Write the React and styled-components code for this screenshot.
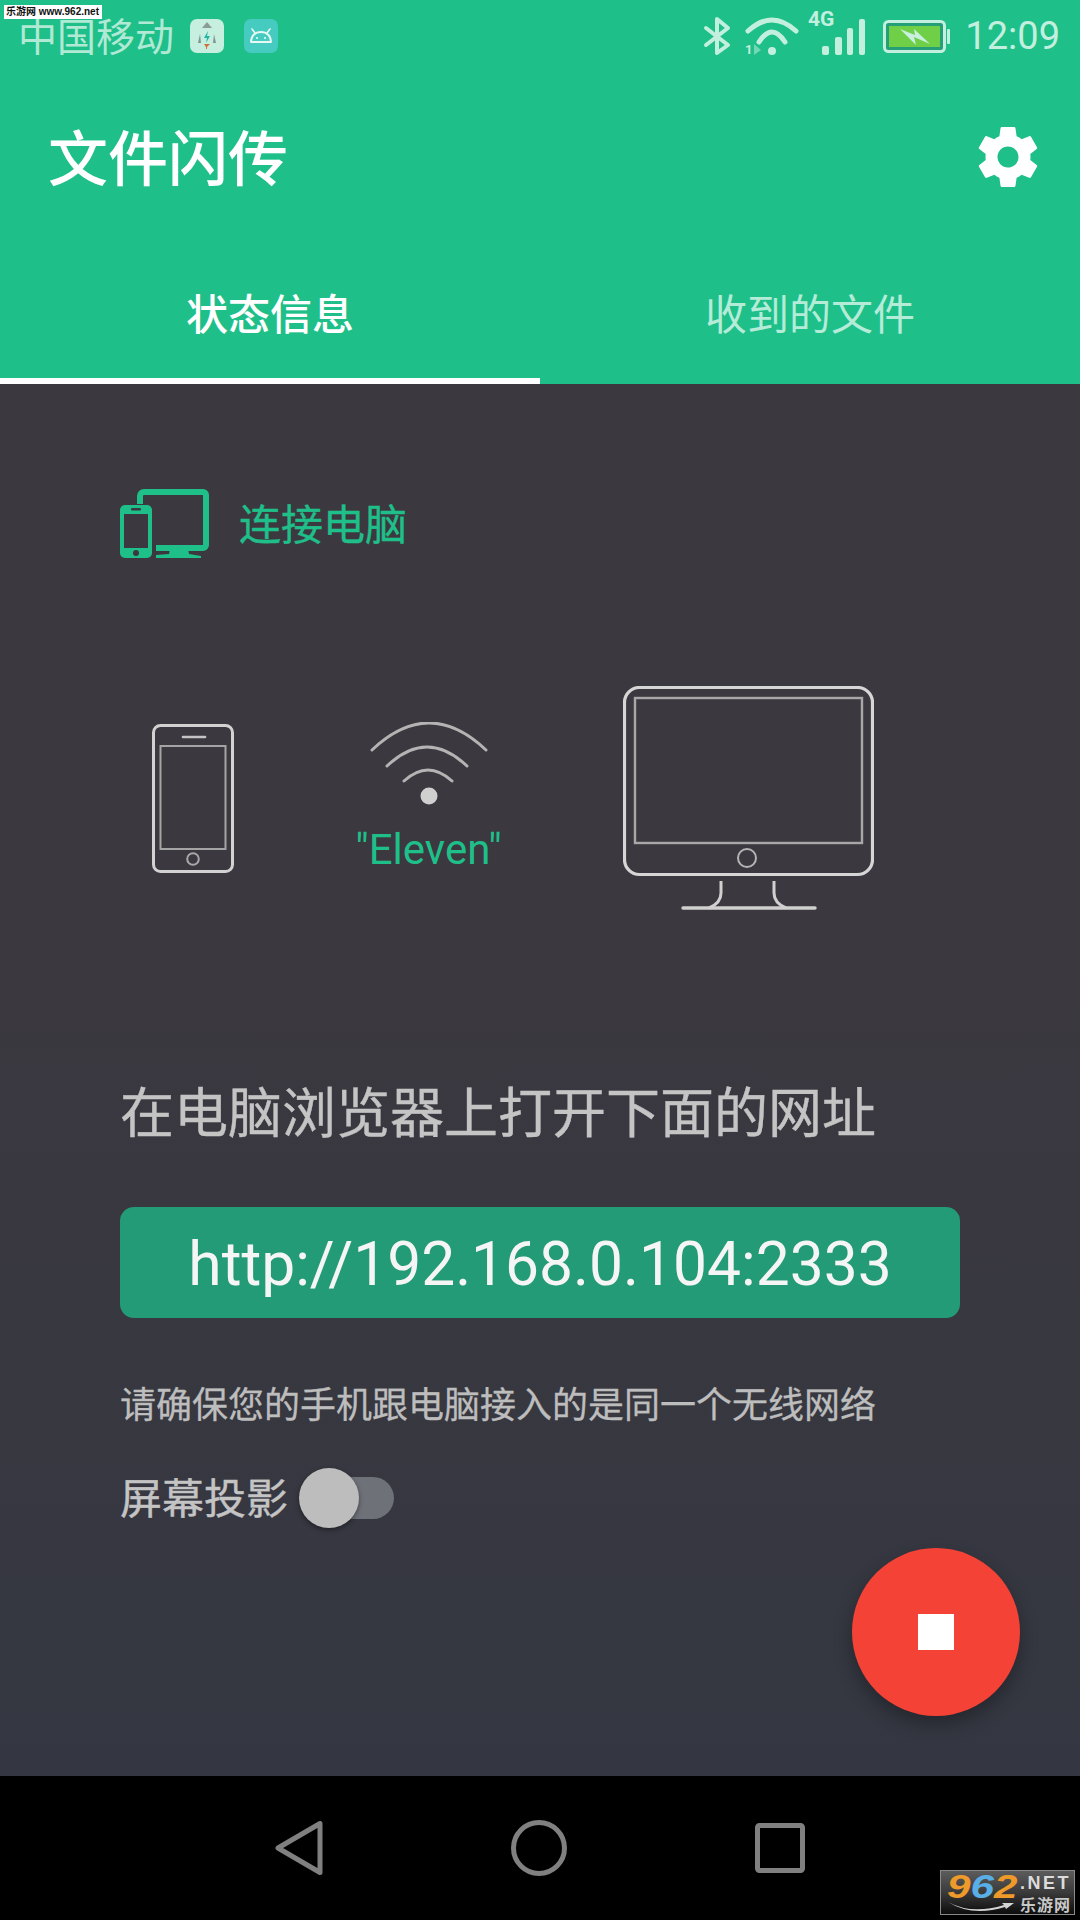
import React from "react";
import styled, { createGlobalStyle } from "styled-components";

const GREEN = "#1fbf8a";
const STATUS = "#c3efdf";

const Global = createGlobalStyle`
  html, body { margin: 0; padding: 0; background: #000; }
  * { box-sizing: border-box; }
  body { font-family: Roboto, "Noto Sans CJK SC", sans-serif; }
`;

const Page = styled.div`
  position: relative;
  width: 1080px;
  height: 1920px;
  display: flex;
  flex-direction: column;
  overflow: hidden;
`;

const Header = styled.header`
  background: ${GREEN};
  display: flex;
  flex-direction: column;
  height: 384px;
`;

// 状态栏
const StatusBar = styled.div`
  height: 72px;
  display: flex;
  align-items: center;
  justify-content: space-between;
  padding: 0 20px 0 18px;
  color: ${STATUS};
`;
const StatusGroup = styled.div`
  display: flex;
  align-items: center;
`;
const Carrier = styled.span`
  font-size: 39px;
  line-height: 44px;
  color: #b0e9d4;
  margin-top: 4px;
`;
const StatusIcon = styled.svg`
  display: block;
  flex: none;
  overflow: visible;
  margin-left: ${(p) => p.$gap || 0}px;
  margin-top: ${(p) => p.$top || 0}px;
`;
const Clock = styled.span`
  font-size: 38px;
  line-height: 44px;
  margin-left: 15px;
`;
const Watermark = styled.div`
  position: absolute;
  left: 4px;
  top: 5px;
  width: 98px;
  height: 14px;
  background: #fff;
  color: #111;
  font: bold 10px/14px "Liberation Sans", "Noto Sans CJK SC", sans-serif;
  white-space: nowrap;
  padding-left: 2px;
`;

// 标题栏
const Toolbar = styled.div`
  height: 170px;
  display: flex;
  align-items: center;
  justify-content: space-between;
  padding: 0 36px 0 48px;
`;
const Title = styled.h1`
  margin: 8px 0 0;
  font-size: 60px;
  font-weight: 500;
  line-height: 80px;
  color: #fff;
`;

const Tabs = styled.div`
  flex: 1;
  display: flex;
`;
const Tab = styled.div`
  flex: 1;
  display: flex;
  align-items: center;
  justify-content: center;
  padding-top: 2px;
  font-size: 42px;
  font-weight: ${(p) => (p.$active ? 500 : 400)};
  color: ${(p) => (p.$active ? "#fff" : "#b4ecd8")};
  border-bottom: 6px solid ${(p) => (p.$active ? "#fff" : "transparent")};
`;

// 内容
const Body = styled.main`
  position: relative;
  height: 1392px;
  padding: 105px 120px 0;
  background: linear-gradient(180deg, #3c383f 0%, #3b383f 40%, #343741 100%);
`;
const ConnectRow = styled.div`
  display: flex;
  align-items: center;
  gap: 30px;
  height: 69px;
`;
const ConnectLabel = styled.span`
  font-size: 42px;
  line-height: 60px;
  color: ${GREEN};
  margin-top: 5px;
  -webkit-text-stroke: 0.4px ${GREEN};
`;
const Illustration = styled.div`
  margin-top: 128px;
  padding-left: 32px;
  display: flex;
  align-items: center;
  gap: 122px;
`;
const Hotspot = styled.div`
  width: 145px;
  display: flex;
  flex-direction: column;
  align-items: center;
`;
const Ssid = styled.div`
  margin-top: 18px;
  font-size: 42px;
  line-height: 50px;
  color: ${GREEN};
  white-space: nowrap;
`;
const Heading = styled.div`
  margin-top: 170px;
  font-size: 54px;
  line-height: 70px;
  color: #c4c4c4;
  white-space: nowrap;
  -webkit-text-stroke: 0.4px #c4c4c4;
`;
const UrlBox = styled.div`
  margin-top: 57px;
  height: 111px;
  padding-top: 3px;
  border-radius: 14px;
  background: #239b76;
  color: #f5f5f5;
  font-size: 60.5px;
  display: flex;
  align-items: center;
  justify-content: center;
`;
const Note = styled.div`
  margin-top: 63px;
  font-size: 36px;
  line-height: 50px;
  color: #bdbdbd;
  white-space: nowrap;
  -webkit-text-stroke: 0.3px #bdbdbd;
`;
const ToggleRow = styled.div`
  margin-top: 37px;
  height: 60px;
  display: flex;
  align-items: center;
  gap: 11px;
`;
const ToggleLabel = styled.span`
  font-size: 42px;
  line-height: 60px;
  margin-top: 3px;
  color: #c4c4c4;
  -webkit-text-stroke: 0.4px #c4c4c4;
`;
const Switch = styled.div`
  position: relative;
  width: 95px;
  height: 60px;
  display: flex;
  align-items: center;
  justify-content: flex-end;
`;
const Track = styled.div`
  width: 83px;
  height: 42px;
  border-radius: 21px;
  background: #6e7178;
`;
const Thumb = styled.div`
  position: absolute;
  left: 0;
  top: 0;
  width: 60px;
  height: 60px;
  border-radius: 50%;
  background: #bdbdbd;
  box-shadow: 0 2px 5px rgba(0, 0, 0, 0.4);
`;
const Fab = styled.div`
  position: absolute;
  right: 60px;
  bottom: 60px;
  width: 168px;
  height: 168px;
  border-radius: 50%;
  background: #f44336;
  box-shadow: 0 8px 18px rgba(0, 0, 0, 0.3);
  display: flex;
  align-items: center;
  justify-content: center;
`;
const StopMark = styled.div`
  width: 36px;
  height: 36px;
  background: #fff;
`;

// 底部导航
const NavBar = styled.nav`
  flex: 1;
  background: #000;
  display: flex;
  align-items: center;
  justify-content: center;
  gap: 188px;
`;

// 水印 logo
const Logo = styled.div`
  position: absolute;
  left: 940px;
  top: 1870px;
  width: 135px;
  height: 45px;
  border: 1px solid #8a8a8a;
  background: linear-gradient(180deg, #5c5c5c 0%, #3a3a3a 50%, #0c0c0c 100%);
  display: flex;
  padding: 0 3px 0 6px;
`;
const LogoLeft = styled.div`
  position: relative;
  width: 72px;
  flex: none;
`;
const LogoDigits = styled.div`
  font: italic bold 33px/32px "Liberation Sans", sans-serif;
  white-space: nowrap;
  transform: scaleX(1.28);
  transform-origin: left center;
`;
const Digit = styled.span`
  color: ${(p) => p.$color};
`;
const Swoosh = styled.svg`
  position: absolute;
  left: 1px;
  bottom: 1px;
`;
const LogoRight = styled.div`
  flex: 1;
  display: flex;
  flex-direction: column;
  align-items: flex-end;
`;
const LogoNet = styled.div`
  font: bold 18px/24px "Liberation Sans", sans-serif;
  letter-spacing: 2.5px;
  color: #dcdcdc;
  white-space: nowrap;
`;
const LogoCn = styled.div`
  font: bold 16px/18px "Noto Sans CJK SC", sans-serif;
  letter-spacing: 1px;
  color: #c8c8c8;
  white-space: nowrap;
`;

const RocketIcon = () => (
  <StatusIcon width="34" height="34" viewBox="0 0 34 34" $gap={16}>
    <rect width="34" height="34" rx="7" fill="#c6efe0" />
    <path d="M17 3l5 6H12z" fill="#8c9c98" />
    <path d="M10 15l-2 9h3zM24 15l2 9h-3z" fill="#84958f" />
    <path d="M18 12l-4 7h3l-1 5 4-7h-3z" fill="#22b5a5" />
    <path d="M14 25h6l-3 3v2h-1v-2z" fill="#d2723a" />
  </StatusIcon>
);

const AndroidIcon = () => (
  <StatusIcon width="34" height="34" viewBox="0 0 34 34" $gap={20}>
    <rect width="34" height="34" rx="7" fill="#45cbc0" />
    <path
      d="M7 23c0-6 4-10 10-10s10 4 10 10z"
      fill="none"
      stroke="#e8f8f5"
      strokeWidth="1.8"
      strokeLinejoin="round"
    />
    <path d="M11 14l-3-4M23 14l3-4" stroke="#e8f8f5" strokeWidth="1.6" strokeLinecap="round" />
    <circle cx="13" cy="19" r="1.1" fill="#e8f8f5" />
    <circle cx="21" cy="19" r="1.1" fill="#e8f8f5" />
  </StatusIcon>
);

const BluetoothIcon = () => (
  <StatusIcon width="28" height="38" viewBox="0 0 28 38">
    <path
      d="M3 11l22 17-11 8V2l11 9L3 28"
      fill="none"
      stroke={STATUS}
      strokeWidth="4"
      strokeLinejoin="round"
      strokeLinecap="round"
    />
  </StatusIcon>
);

const WifiStatusIcon = () => (
  <StatusIcon width="53" height="38" viewBox="0 0 53 38" $gap={13}>
    <path d="M4 14Q28 -8 52 14" fill="none" stroke={STATUS} strokeWidth="5" strokeLinecap="round" />
    <path d="M15 25Q28 5 41 25" fill="none" stroke={STATUS} strokeWidth="5" strokeLinecap="round" />
    <circle cx="28" cy="34" r="4" fill={STATUS} />
    <text x="1" y="37" fontSize="13" fontWeight="700" fontFamily="Roboto" fill={STATUS}>
      1
    </text>
    <path d="M10 27l7 6-7 5z" fill={STATUS} opacity="0.5" />
  </StatusIcon>
);

const SignalIcon = () => (
  <StatusIcon width="58" height="44" viewBox="0 0 58 44" $gap={10} $top={-6}>
    <text x="1" y="15" fontSize="21" fontWeight="700" fontFamily="Roboto" fill={STATUS}>
      4G
    </text>
    <rect x="15" y="35" width="7" height="9" rx="2" fill={STATUS} />
    <rect x="28" y="26" width="7" height="18" rx="2" fill={STATUS} />
    <rect x="40" y="17" width="6" height="27" rx="2" fill={STATUS} />
    <rect x="52" y="8" width="6" height="36" rx="2" fill={STATUS} />
  </StatusIcon>
);

const BatteryIcon = () => (
  <StatusIcon width="67" height="33" viewBox="0 0 67 33" $gap={18}>
    <rect x="1.5" y="1.5" width="60" height="30" rx="4" fill="#249f78" stroke={STATUS} strokeWidth="3" />
    <rect x="6" y="6" width="51" height="21" fill="#6fd047" />
    <rect x="64" y="9" width="3" height="15" rx="1" fill={STATUS} />
    <path d="M17 9l15 6-1-6 16 15-16-7 2 8z" fill="#c9efe0" />
  </StatusIcon>
);

const GearIcon = () => (
  <svg width="72" height="72" viewBox="0 0 24 24" fill="#fff">
    <path d="M19.43 12.98c.04-.32.07-.64.07-.98s-.03-.66-.07-.98l2.11-1.65c.19-.15.24-.42.12-.64l-2-3.46c-.12-.22-.39-.3-.61-.22l-2.49 1c-.52-.4-1.08-.73-1.69-.98l-.38-2.65C14.46 2.18 14.25 2 14 2h-4c-.25 0-.46.18-.49.42l-.38 2.65c-.61.25-1.17.59-1.69.98l-2.49-1c-.23-.09-.49 0-.61.22l-2 3.46c-.13.22-.07.49.12.64l2.11 1.65c-.04.32-.07.65-.07.98s.03.66.07.98l-2.11 1.65c-.19.15-.24.42-.12.64l2 3.46c.12.22.39.3.61.22l2.49-1c.52.4 1.08.73 1.69.98l.38 2.65c.03.24.24.42.49.42h4c.25 0 .46-.18.49-.42l.38-2.65c.61-.25 1.17-.59 1.69-.98l2.49 1c.23.09.49 0 .61-.22l2-3.46c.12-.22.07-.49-.12-.64l-2.11-1.65zM12 15.5c-1.93 0-3.5-1.57-3.5-3.5s1.57-3.5 3.5-3.5 3.5 1.57 3.5 3.5-1.57 3.5-3.5 3.5z" />
  </svg>
);

const DevicesIcon = () => (
  <svg width="89" height="69" viewBox="0 0 89 69">
    <path
      d="M20 15V7a4 4 0 0 1 4-4H83a3 3 0 0 1 3 3v50a3 3 0 0 1-3 3H36"
      fill="none"
      stroke={GREEN}
      strokeWidth="6"
    />
    <path d="M50 60h18l1 5 12 2v2H36v-3l13-1z" fill={GREEN} />
    <rect x="0" y="16" width="32" height="53" rx="5" fill={GREEN} />
    <rect x="4" y="25" width="24" height="34" fill="#3b383f" />
    <rect x="11" y="19" width="10" height="2.5" rx="1" fill="#3b383f" />
    <circle cx="16" cy="64" r="3" fill="#3b383f" />
  </svg>
);

const PhoneArt = () => (
  <svg width="82" height="149" viewBox="0 0 82 149" fill="none">
    <rect x="1.5" y="1.5" width="79" height="146" rx="7" stroke="#d2d2d2" strokeWidth="3" />
    <rect x="8.5" y="22" width="65" height="103" stroke="#a4a4a4" strokeWidth="2" />
    <path d="M31 13h22" stroke="#c4c4c4" strokeWidth="2.6" strokeLinecap="round" />
    <circle cx="41" cy="135" r="5.8" stroke="#a8a8a8" strokeWidth="2" />
  </svg>
);

const WifiArt = () => (
  <svg width="145" height="85" viewBox="0 0 145 85" fill="none">
    <path d="M16 28Q73 -26 130 28" stroke="#b4b4b4" strokeWidth="3" strokeLinecap="round" />
    <path d="M31 44Q71 6 111 44" stroke="#b4b4b4" strokeWidth="3" strokeLinecap="round" />
    <path d="M48 59Q72 37 96 59" stroke="#b4b4b4" strokeWidth="3" strokeLinecap="round" />
    <circle cx="73" cy="74" r="8.5" fill="#d0d0d0" />
  </svg>
);

const MonitorArt = () => (
  <svg width="251" height="224" viewBox="0 0 251 224" fill="none">
    <rect x="1.5" y="1.5" width="248" height="187" rx="15" stroke="#d6d6d6" strokeWidth="3.2" />
    <rect x="12" y="12" width="227" height="145" stroke="#a8a8a8" strokeWidth="2.4" />
    <circle cx="124" cy="172" r="9" stroke="#b4b4b4" strokeWidth="2" />
    <path d="M98 195v12q0 10-12 15M151 195v12q0 10 12 15" stroke="#d0d0d0" strokeWidth="3" />
    <path d="M60 222H192" stroke="#d0d0d0" strokeWidth="3.4" strokeLinecap="round" />
  </svg>
);

const BackIcon = () => (
  <svg width="48" height="54" viewBox="0 0 48 54" fill="none">
    <path d="M3 27L45 2.5V51.5z" stroke="#808080" strokeWidth="5" strokeLinejoin="round" />
  </svg>
);
const HomeIcon = () => (
  <svg width="56" height="56" viewBox="0 0 56 56" fill="none">
    <circle cx="28" cy="28" r="25.5" stroke="#808080" strokeWidth="5" />
  </svg>
);
const RecentIcon = () => (
  <svg width="50" height="50" viewBox="0 0 50 50" fill="none">
    <rect x="2.5" y="2.5" width="45" height="45" rx="2" stroke="#808080" strokeWidth="5" />
  </svg>
);

const App = () => {
  return (
    <Page>
      <Global />
      <Header>
        <StatusBar>
          <StatusGroup>
            <Carrier>中国移动</Carrier>
            <RocketIcon />
            <AndroidIcon />
          </StatusGroup>
          <StatusGroup>
            <BluetoothIcon />
            <WifiStatusIcon />
            <SignalIcon />
            <BatteryIcon />
            <Clock>12:09</Clock>
          </StatusGroup>
        </StatusBar>
        <Toolbar>
          <Title>文件闪传</Title>
          <GearIcon />
        </Toolbar>
        <Tabs>
          <Tab $active>状态信息</Tab>
          <Tab>收到的文件</Tab>
        </Tabs>
      </Header>

      <Body>
        <ConnectRow>
          <DevicesIcon />
          <ConnectLabel>连接电脑</ConnectLabel>
        </ConnectRow>

        <Illustration>
          <PhoneArt />
          <Hotspot>
            <WifiArt />
            <Ssid>"Eleven"</Ssid>
          </Hotspot>
          <MonitorArt />
        </Illustration>

        <Heading>在电脑浏览器上打开下面的网址</Heading>
        <UrlBox>http://192.168.0.104:2333</UrlBox>
        <Note>请确保您的手机跟电脑接入的是同一个无线网络</Note>

        <ToggleRow>
          <ToggleLabel>屏幕投影</ToggleLabel>
          <Switch>
            <Track />
            <Thumb />
          </Switch>
        </ToggleRow>

        <Fab>
          <StopMark />
        </Fab>
      </Body>

      <NavBar>
        <BackIcon />
        <HomeIcon />
        <RecentIcon />
      </NavBar>

      <Watermark>乐游网 www.962.net</Watermark>
      <Logo>
        <LogoLeft>
          <LogoDigits>
            <Digit $color="#ee9a2a">9</Digit>
            <Digit $color="#5aaee6">6</Digit>
            <Digit $color="#ee9a2a">2</Digit>
          </LogoDigits>
          <Swoosh width="68" height="12" viewBox="0 0 68 12">
            <path d="M0 1Q24 14 56 4l-2-2 12 0-8 6-1-2Q24 16 0 1z" fill="#d4d4d4" />
          </Swoosh>
        </LogoLeft>
        <LogoRight>
          <LogoNet>.NET</LogoNet>
          <LogoCn>乐游网</LogoCn>
        </LogoRight>
      </Logo>
    </Page>
  );
};

export default App;
